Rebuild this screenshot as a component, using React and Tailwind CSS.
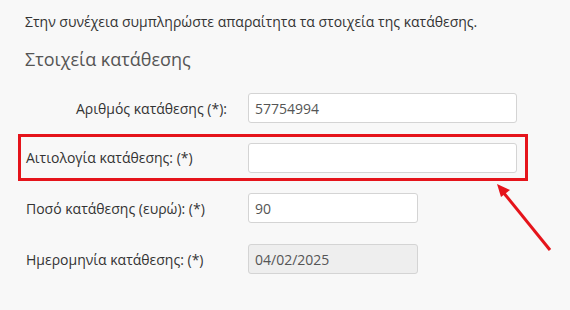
export default function App() {
    const fields = [
        { label: "Αριθμός κατάθεσης (*):", value: "57754994" },
        { label: "Αιτιολογία κατάθεσης: (*)", value: "" },
        { label: "Ποσό κατάθεσης (ευρώ): (*)", value: "90" },
        { label: "Ημερομηνία κατάθεσης: (*)", value: "04/02/2025" },
    ];

    const inputCls = "h-[30px] px-[6px] border border-[#d4d4d4] rounded-[3px] text-[14px] text-[#555] outline-none";

    return (
        <div className="relative w-[570px] h-[310px] overflow-hidden bg-[#f8f8f8] text-[#333] font-['Open_Sans',sans-serif]">
            <div className="px-[25px] pt-[12px]">
                <p className="text-[14px] leading-[20px]">
                    Στην συνέχεια συμπληρώστε απαραίτητα τα στοιχεία της κατάθεσης.
                </p>
                <h2 className="mt-[15px] text-[18px] leading-[24px] text-[#555]">Στοιχεία κατάθεσης</h2>

                <div className="mt-[22px] flex flex-col">
                    {/* Row 1 */}
                    <div className="flex items-center h-[30px]">
                        <label className="w-[223px] pr-[21px] text-right text-[14px]">{fields[0].label}</label>
                        <input readOnly value={fields[0].value} className={`w-[269px] bg-white ${inputCls}`} />
                    </div>

                    {/* Row 2 - highlighted */}
                    <div className="mt-[11px] -mx-[7px] px-[4px] h-[47px] w-[510px] flex items-center border-[3px] border-[#e5141b]">
                        <label className="w-[223px] pl-[1px] text-[14px]">{fields[1].label}</label>
                        <input readOnly value={fields[1].value} className={`w-[269px] bg-white ${inputCls}`} />
                    </div>

                    {/* Row 3 */}
                    <div className="mt-[12px] flex items-center h-[30px]">
                        <label className="w-[223px] pl-[1px] text-[14px]">{fields[2].label}</label>
                        <input readOnly value={fields[2].value} className={`w-[170px] bg-white ${inputCls}`} />
                    </div>

                    {/* Row 4 */}
                    <div className="mt-[21px] flex items-center h-[30px]">
                        <label className="w-[223px] pl-[1px] text-[14px]">{fields[3].label}</label>
                        <input readOnly disabled value={fields[3].value} className={`w-[170px] bg-[#eeeeee] ${inputCls}`} />
                    </div>
                </div>
            </div>

            {/* annotation arrow */}
            <svg className="absolute left-0 top-0 pointer-events-none" width="570" height="310">
                <line x1="550" y1="250" x2="503" y2="192" stroke="#e5141b" strokeWidth="3" />
                <polygon points="497,184 510,190 501,197" fill="#e5141b" />
            </svg>
        </div>
    );
}
